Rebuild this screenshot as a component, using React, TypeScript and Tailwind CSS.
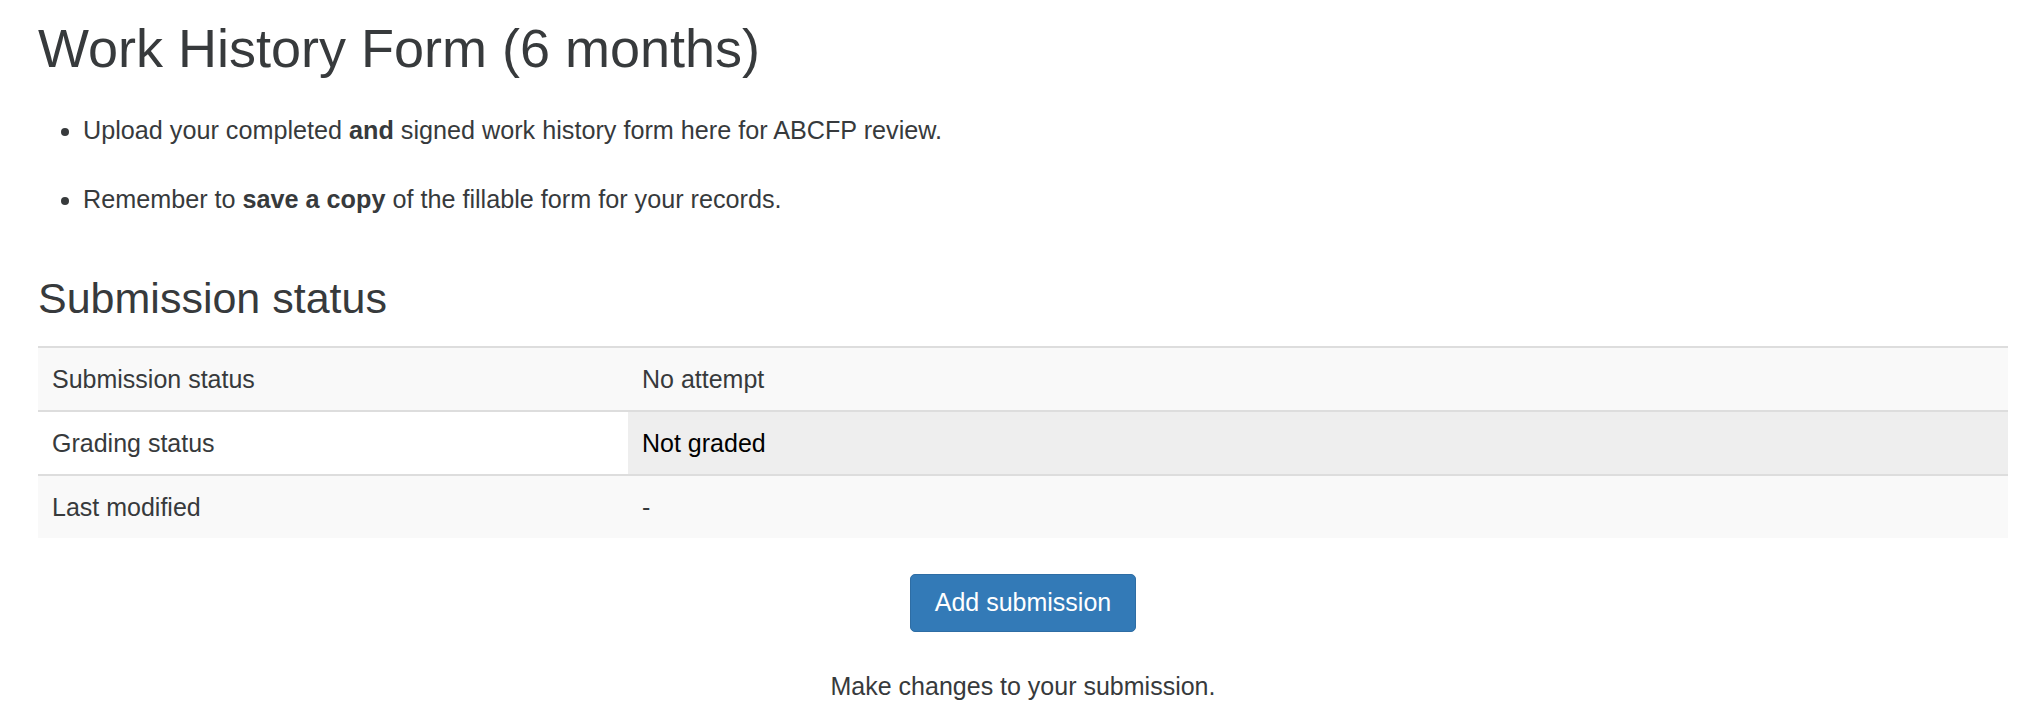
export default function App() {
  const rows = [
    { label: 'Submission status', value: 'No attempt', bg: 'bg-[#f9f9f9]', valueBg: '', valueText: 'text-[#373a3c]' },
    { label: 'Grading status', value: 'Not graded', bg: 'bg-white', valueBg: 'bg-[#eeeeee]', valueText: 'text-black' },
    { label: 'Last modified', value: '-', bg: 'bg-[#f9f9f9]', valueBg: '', valueText: 'text-[#373a3c]' },
  ];

  return (
    <div
      className="min-h-screen bg-white pl-[38px] pr-[26px] text-[#373a3c]"
      style={{ fontFamily: '"Liberation Sans", Arial, Helvetica, sans-serif' }}
    >
      <h2 className="pt-[19px] text-[54px] leading-[1.1] font-normal">Work History Form (6 months)</h2>

      <ul className="mt-[34px] flex list-disc flex-col gap-[31.5px] pl-[45px] text-[25.2px] leading-[37.5px]">
        <li>
          Upload your completed <strong className="font-bold">and</strong> signed work history form here for ABCFP review.
        </li>
        <li>
          Remember to <strong className="font-bold">save a copy</strong> of the fillable form for your records.
        </li>
      </ul>

      <h3 className="mt-[56px] text-[43px] leading-[1.1] font-normal">Submission status</h3>

      <div className="mt-[24px] text-[25px] leading-[36px]">
        {rows.map((row) => (
          <div key={row.label} className={`flex h-[64px] border-t-2 border-[#dddddd] ${row.bg}`}>
            <div className="flex w-[590px] shrink-0 items-center px-[14px]">{row.label}</div>
            <div className={`flex flex-1 items-center px-[14px] ${row.valueBg} ${row.valueText}`}>{row.value}</div>
          </div>
        ))}
      </div>

      <div className="mt-[36px] flex justify-center">
        <button className="flex h-[58px] w-[226px] items-center justify-center rounded-[5px] border border-[#2e6da4] bg-[#337ab7] text-[25px] text-white">
          Add submission
        </button>
      </div>

      <p className="mt-[36px] text-center text-[25px] leading-[37.5px]">Make changes to your submission.</p>
    </div>
  );
}
